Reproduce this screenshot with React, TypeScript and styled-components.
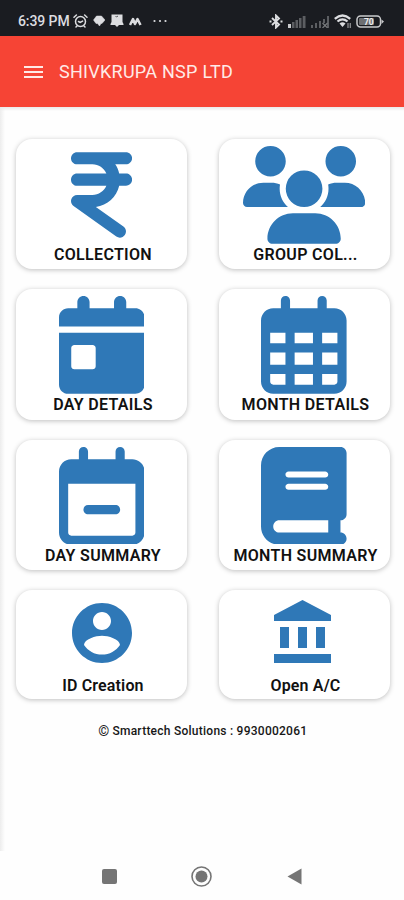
import React from 'react';
import styled, { createGlobalStyle } from 'styled-components';
import type { IconType } from 'react-icons';
import {
  FaIndianRupeeSign,
  FaUsers,
  FaCalendarDay,
  FaRegCalendarDays,
  FaRegCalendarMinus,
  FaBook,
} from 'react-icons/fa6';

const GlobalStyle = createGlobalStyle`
  * { box-sizing: border-box; }
  body { margin: 0; background: #fefefe; font-family: Roboto, sans-serif; }
`;

const Screen = styled.div`
  display: flex;
  flex-direction: column;
  width: 404px;
  height: 900px;
  background: #fefefe;
  overflow: hidden;
`;

const StatusBar = styled.header`
  display: flex;
  align-items: center;
  justify-content: space-between;
  flex: none;
  height: 36px;
  padding: 6px 20px 0 18px;
  background: #1a1c21;
  color: #dcdde0;
`;

const StatusGroup = styled.div<{ $gap: number }>`
  display: flex;
  align-items: center;
  gap: ${(p) => p.$gap}px;
  svg { display: block; flex: none; }
`;

const Clock = styled.span`
  width: 52px;
  margin-right: -2px;
  font-size: 14px;
  font-weight: 500;
  line-height: 16px;
  letter-spacing: -0.1px;
  white-space: nowrap;
`;

const AppBar = styled.div`
  display: flex;
  align-items: center;
  flex: none;
  gap: 16px;
  height: 71px;
  padding: 0 24px;
  background: #f64435;
  color: #ffeae7;
`;

const MenuButton = styled.button`
  display: flex;
  padding: 0;
  border: 0;
  background: none;
  color: inherit;
`;

const Title = styled.h1`
  margin: 0;
  font-size: 18px;
  font-weight: 400;
  line-height: 24px;
  letter-spacing: 0.27px;
`;

const Content = styled.main`
  flex: none;
  height: 744px;
  padding: 32px 14.5px 0 16px;
  background: linear-gradient(90deg, #ededed, #fefefe 5px);
  box-shadow: inset 0 4px 3px -2px #e9e9e9;
`;

const Grid = styled.div`
  display: grid;
  grid-template-columns: 171px 171px;
  justify-content: space-between;
  row-gap: 20px;
`;

const Card = styled.button<{ $small?: boolean }>`
  display: flex;
  flex-direction: column;
  align-items: center;
  height: ${(p) => (p.$small ? 109.5 : 130.3)}px;
  padding: ${(p) => (p.$small ? 7.3 : 7)}px 0 0;
  border: 0;
  border-radius: 16px;
  background: #fff;
  color: #111;
  font-family: inherit;
  box-shadow: 0 1px 5px rgba(0, 0, 0, 0.25);
  svg { display: block; flex: none; }
`;

const IconBox = styled.span<{ $width: number; $height: number }>`
  display: block;
  flex: none;
  color: #2f78b7;
  svg {
    width: ${(p) => p.$width}px;
    height: ${(p) => p.$height}px;
  }
`;

const Label = styled.span<{ $small?: boolean }>`
  margin-top: ${(p) => (p.$small ? 7 : 1.4)}px;
  margin-left: 3px;
  font-size: 16px;
  font-weight: 600;
  line-height: 20px;
  letter-spacing: ${(p) => (p.$small ? 0.15 : 0.32)}px;
  white-space: nowrap;
`;

const Footer = styled.p`
  display: flex;
  align-items: center;
  justify-content: center;
  gap: 3px;
  margin: 23px 0 0;
  font-size: 12px;
  font-weight: 500;
  line-height: 18px;
  letter-spacing: 0.25px;
  color: #171717;
`;

const Copyright = styled.span`
  font-size: 14px;
  font-weight: 400;
`;

const NavBar = styled.nav`
  display: flex;
  align-items: center;
  justify-content: center;
  gap: 74.5px;
  flex: 1;
  padding: 2px 1px 0 0;
  background: #fefefe;
  svg { display: block; }
`;

function AccountIcon() {
  return (
    <svg viewBox="0 0 24 24" fill="currentColor">
      <path d="M12 2C6.480 2 2 6.480 2 12s4.480 10 10 10 10-4.480 10-10S17.520 2 12 2zm0 3c1.660 0 3 1.340 3 3s-1.340 3-3 3-3-1.340-3-3 1.340-3 3-3zm0 14.200c-2.500 0-4.710-1.280-6-3.220.030-1.990 4-3.080 6-3.080 1.990 0 5.970 1.090 6 3.080-1.290 1.940-3.500 3.220-6 3.220z" />
    </svg>
  );
}

function BankIcon() {
  return (
    <svg viewBox="0 0 24 24" fill="currentColor">
      <path d="M4 10v7h3v-7H4zm6 0v7h3v-7h-3zM2 22h19v-3H2v3zm14-12v7h3v-7h-3zm-4.500-9L2 6v2h19V6l-9.500-5z" />
    </svg>
  );
}

interface Item {
  label: string;
  icon: IconType | (() => React.JSX.Element);
  width: number;
  small?: boolean;
}

const items: Item[] = [
  { label: 'COLLECTION', icon: FaIndianRupeeSign, width: 61.1 },
  { label: 'GROUP COL...', icon: FaUsers, width: 122.2 },
  { label: 'DAY DETAILS', icon: FaCalendarDay, width: 85.6 },
  { label: 'MONTH DETAILS', icon: FaRegCalendarDays, width: 85.6 },
  { label: 'DAY SUMMARY', icon: FaRegCalendarMinus, width: 85.6 },
  { label: 'MONTH SUMMARY', icon: FaBook, width: 85.6 },
  { label: 'ID Creation', icon: AccountIcon, width: 72, small: true },
  { label: 'Open A/C', icon: BankIcon, width: 72, small: true },
];

function StatusLeft() {
  return (
    <StatusGroup $gap={5}>
      <Clock>6:39 PM</Clock>
      <svg width="15" height="14" viewBox="0 0 15 14" fill="none" stroke="currentColor" strokeWidth="1.5" strokeLinecap="round">
        <circle cx="7.5" cy="7.5" r="5" />
        <path d="M1 3.2 3.4 1M14 3.2 11.6 1M5.5 7.5l1.7 1 2.4-1.4M4 12l-1 1M11 12l1 1" />
      </svg>
      <svg width="12" height="12" viewBox="0 0 12 12" fill="currentColor">
        <path d="M3.5 1h5L12 5 9 8.5H8L6.500 11 4.500 8.500H3L.5 5z" stroke="currentColor" strokeWidth="0.5" strokeLinejoin="round" />
      </svg>
      <svg width="14" height="14" viewBox="0 0 14 14" fill="currentColor">
        <path d="M1.500 .5h11V8l1 2v1H9L7 13l-2-2H.5v-1l1-2z" />
        <path d="m5.500 2 1 1 1.500-1" stroke="#55575b" fill="none" />
      </svg>
      <svg width="13" height="9" viewBox="0 0 13 9" fill="none" stroke="currentColor" strokeWidth="2.500" strokeLinejoin="round">
        <path d="m1 8 3-6 2 5 2.500-5L11.500 8" />
      </svg>
      <svg width="24" height="4" viewBox="0 0 24 4" fill="currentColor">
        <circle cx="7.500" cy="2" r="1.100" />
        <circle cx="13" cy="2" r="1.100" />
        <circle cx="18.500" cy="2" r="1.100" />
      </svg>
    </StatusGroup>
  );
}

function StatusRight() {
  return (
    <StatusGroup $gap={5}>
      <svg width="14" height="15" viewBox="0 0 14 15" fill="none" stroke="currentColor" strokeWidth="1.900">
        <path d="m3 4 7 6.500L7 13.500v-12l3 3L3 11" />
        <path d="M.5 7.500h2M11.500 7.500h2" strokeWidth="2" />
      </svg>
      <svg width="18" height="13" viewBox="0 0 18 13" fill="#5c5e62">
        <rect x="0" y="9" width="3" height="4" fill="#c9cacc" />
        <rect x="4" y="7" width="2.500" height="6" />
        <rect x="7.500" y="5" width="2.500" height="8" />
        <rect x="11" y="3" width="2.500" height="10" />
        <rect x="14.700" y="1" width="2.800" height="12" />
      </svg>
      <svg width="18" height="13" viewBox="0 0 18 13" fill="#5c5e62">
        <rect x="0" y="10" width="2" height="3" />
        <rect x="4" y="8" width="2" height="5" />
        <rect x="8" y="6" width="2" height="7" />
        <rect x="12" y="4" width="2" height="4" />
        <rect x="16" y="1" width="2" height="12" />
        <path d="m11.500 8 5 5m0-5-5 5" stroke="#77797c" strokeWidth="1.200" />
      </svg>
      <svg width="17" height="14" viewBox="0 0 17 14" fill="none" stroke="currentColor" strokeWidth="2.300">
        <path d="M.8 4.800Q8.500-1.800 16.200 4.800M3.500 7.500q5-4.300 10 0" />
        <path d="M5.500 9.500Q8.500 7 11.500 9.500L8.500 13z" fill="currentColor" stroke="none" />
        <path d="M14 9v5M16.300 9v5" stroke="#8c8d90" strokeWidth="1.300" />
      </svg>
      <svg width="28" height="13" viewBox="0 0 28 13">
        <rect x="1" y="1" width="23.500" height="11" rx="3.500" fill="none" stroke="#c9cacc" strokeWidth="1.500" />
        <rect x="3" y="3" width="15" height="7" rx="1" fill="#6d6f72" />
        <path d="M25.500 4.500 28 6.500 25.500 9z" fill="#c9cacc" />
        <text x="12.800" y="9.600" textAnchor="middle" fontFamily="Roboto, sans-serif" fontSize="8.500" fontWeight="700" fill="#eee">70</text>
      </svg>
    </StatusGroup>
  );
}

export default function App() {
  return (
    <>
      <GlobalStyle />
      <Screen>
        <StatusBar>
          <StatusLeft />
          <StatusRight />
        </StatusBar>
        <AppBar>
          <MenuButton aria-label="Menu">
            <svg width="19" height="14" viewBox="0 0 19 14" fill="none" stroke="currentColor" strokeWidth="2">
              <path d="M0 2h19M0 7h19M0 12h19" />
            </svg>
          </MenuButton>
          <Title>SHIVKRUPA NSP LTD</Title>
        </AppBar>
        <Content>
          <Grid>
            {items.map(({ label, icon: Icon, width, small }) => (
              <Card key={label} $small={small}>
                <IconBox $width={width} $height={small ? 72 : 97.8}>
                  <Icon />
                </IconBox>
                <Label $small={small}>{label}</Label>
              </Card>
            ))}
          </Grid>
          <Footer>
            <Copyright>©</Copyright>
            <span>Smarttech Solutions : 9930002061</span>
          </Footer>
        </Content>
        <NavBar>
          <svg width="15" height="15" viewBox="0 0 15 15">
            <rect width="15" height="15" rx="2" fill="#757575" />
          </svg>
          <svg width="21" height="21" viewBox="0 0 21 21">
            <circle cx="10.500" cy="10.500" r="9.500" fill="none" stroke="#757575" strokeWidth="1.600" />
            <circle cx="10.500" cy="10.500" r="6" fill="#757575" />
          </svg>
          <svg width="15" height="17" viewBox="0 0 15 17">
            <path d="M14.500.5v16L.5 8.500z" fill="#757575" />
          </svg>
        </NavBar>
      </Screen>
    </>
  );
}
